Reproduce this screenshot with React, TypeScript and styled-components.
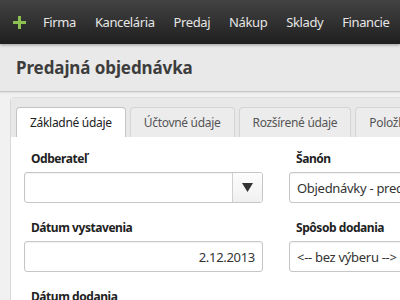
import styled, { createGlobalStyle } from 'styled-components';

const GlobalStyle = createGlobalStyle`
  html, body {
    margin: 0;
    padding: 0;
    overflow: hidden;
    background: #f1f1f1;
    font-family: "Noto Sans", "Open Sans", sans-serif;
  }
`;

const TopBar = styled.div`
  height: 44px;
  display: flex;
  align-items: center;
  padding-left: 13px;
  background: linear-gradient(#434343, #1f1f1f);
  box-shadow: 0 1px 3px rgba(0, 0, 0, 0.35);
  position: relative;
  z-index: 2;
  white-space: nowrap;
`;

const Logo = styled.svg`
  width: 13px;
  height: 13px;
  margin-right: 7.5px;
  flex-shrink: 0;
`;

const NavItem = styled.div`
  color: #e6e6e6;
  font-size: 13px;
  letter-spacing: -0.4px;
  padding: 0 9.5px;
`;

const TitleBar = styled.div`
  height: 47px;
  display: flex;
  align-items: center;
  padding: 0 16px;
  background: #e9e9e9;
  border-bottom: 1px solid #c6c6c6;
  box-shadow: 0 1px 2px rgba(0, 0, 0, 0.08);
`;

const Title = styled.h1`
  margin: 0;
  font-size: 17px;
  font-weight: bold;
  letter-spacing: -0.1px;
  color: #3d3d3d;
`;

const Page = styled.div`
  padding: 5px 0 0 10px;
`;

const Panel = styled.div`
  width: 520px;
  border-left: 1px solid #d9d9d9;
  border-top: 1px solid #dedede;
  border-top-left-radius: 4px;
  background: #fff;
`;

const TabStrip = styled.div`
  display: flex;
  gap: 4px;
  padding: 9px 0 0 5px;
  background: #e8e8e8;
  border-top-left-radius: 4px;
`;

const Tab = styled.div<{ active?: boolean }>`
  height: 29px;
  padding: 0 13px;
  display: flex;
  align-items: center;
  font-size: 12px;
  letter-spacing: -0.3px;
  color: ${({ active }) => (active ? '#222' : '#555')};
  background: ${({ active }) => (active ? '#fff' : '#ececec')};
  border: 1px solid ${({ active }) => (active ? '#c4c4c4' : '#d4d4d4')};
  border-bottom: none;
  border-radius: 4px 4px 0 0;
  white-space: nowrap;
`;

const Form = styled.div`
  display: grid;
  grid-template-columns: 239px 239px;
  column-gap: 26px;
  padding: 14px 0 0 13px;
`;

const Field = styled.div`
  margin-bottom: 17px;
`;

const Label = styled.div`
  font-size: 12px;
  line-height: 16px;
  font-weight: bold;
  letter-spacing: -0.45px;
  color: #222;
  padding-left: 7px;
  margin-bottom: 5px;
`;

const Input = styled.div<{ align?: string }>`
  height: 29px;
  display: flex;
  align-items: center;
  justify-content: ${({ align }) => (align === 'right' ? 'flex-end' : 'flex-start')};
  padding: 0 7px;
  border: 1px solid #c6c6c6;
  border-radius: 3px;
  box-shadow: inset 0 1px 2px rgba(0, 0, 0, 0.06);
  font-size: 13px;
  letter-spacing: -0.3px;
  color: #333;
  white-space: nowrap;
  overflow: hidden;
`;

const ComboInput = styled(Input)`
  padding: 0;
  justify-content: flex-end;
`;

const DropButton = styled.div`
  width: 29px;
  height: 100%;
  border-left: 1px solid #d0d0d0;
  background: linear-gradient(#fdfdfd, #f0f0f0);
  display: flex;
  align-items: center;
  justify-content: center;
`;

const Arrow = styled.svg`
  width: 11px;
  height: 9px;
`;

const App = () => {
  const menu = ['Firma', 'Kancelária', 'Predaj', 'Nákup', 'Sklady', 'Financie'];
  const tabs = ['Základné údaje', 'Účtovné údaje', 'Rozšírené údaje', 'Položky'];

  return (
    <>
      <GlobalStyle />
      <TopBar>
        <Logo viewBox="0 0 13 13">
          <rect x="5" y="0" width="3" height="13" fill="#8cc152" />
          <rect x="0" y="5" width="13" height="3" fill="#8cc152" />
        </Logo>
        {menu.map((m) => (
          <NavItem key={m}>{m}</NavItem>
        ))}
      </TopBar>
      <TitleBar>
        <Title>Predajná objednávka</Title>
      </TitleBar>
      <Page>
        <Panel>
          <TabStrip>
            {tabs.map((t, i) => (
              <Tab key={t} active={i === 0}>{t}</Tab>
            ))}
          </TabStrip>
          <Form>
            <Field>
              <Label>Odberateľ</Label>
              <ComboInput>
                <DropButton>
                  <Arrow viewBox="0 0 11 9">
                    <path d="M0 0 L11 0 L5.5 9 Z" fill="#333" />
                  </Arrow>
                </DropButton>
              </ComboInput>
            </Field>
            <Field>
              <Label>Šanón</Label>
              <Input>Objednávky - predaj</Input>
            </Field>
            <Field>
              <Label>Dátum vystavenia</Label>
              <Input align="right">2.12.2013</Input>
            </Field>
            <Field>
              <Label>Spôsob dodania</Label>
              <Input>&lt;-- bez výberu --&gt;</Input>
            </Field>
            <Field>
              <Label>Dátum dodania</Label>
              <Input />
            </Field>
          </Form>
        </Panel>
      </Page>
    </>
  );
};

export default App;
